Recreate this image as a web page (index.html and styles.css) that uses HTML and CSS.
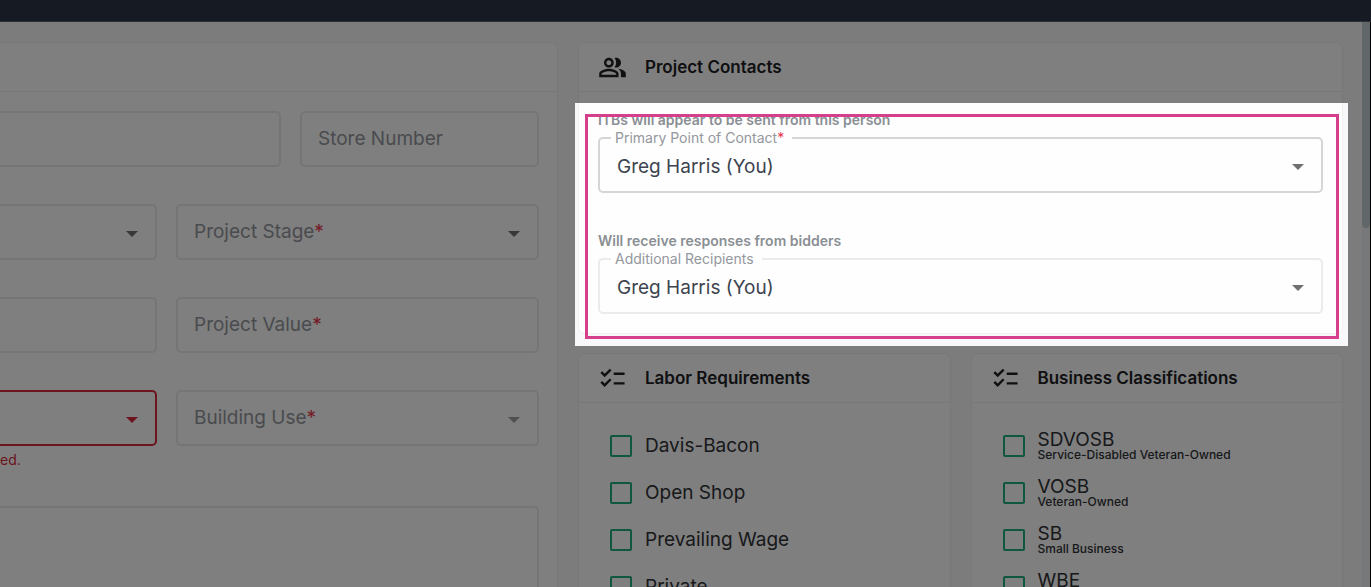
FILE: index.html
```html
<!DOCTYPE html>
<html lang="en">
<head>
    <meta charset="UTF-8">
    <title>Create Project</title>
    <link rel="stylesheet" href="styles.css">
</head>
<body>
    <svg class="sprite" aria-hidden="true">
        <symbol id="arrow" viewBox="0 0 24 24"><path d="M6 10l6 6 6-6z"/></symbol>
        <symbol id="checklist" viewBox="0 0 24 24"><path d="M22 7h-9v2h9V7zm0 8h-9v2h9v-2zM5.54 11L2 7.46l1.41-1.41 2.12 2.12 4.24-4.24 1.41 1.41L5.54 11zm0 8L2 15.46l1.41-1.41 2.12 2.12 4.24-4.24 1.41 1.41L5.54 19z"/></symbol>
        <symbol id="people" viewBox="0 0 24 24"><path d="M16.67 13.13C18.04 14.06 19 15.32 19 17v3h4v-3c0-2.18-3.57-3.47-6.33-3.87zM15 12c2.21 0 4-1.79 4-4s-1.79-4-4-4c-.47 0-.91.1-1.33.24C14.5 5.27 15 6.58 15 8s-.5 2.73-1.33 3.76c.42.14.86.24 1.33.24zM9 12c2.21 0 4-1.79 4-4s-1.79-4-4-4-4 1.79-4 4 1.79 4 4 4zm0-6c1.1 0 2 .9 2 2s-.9 2-2 2-2-.9-2-2 .9-2 2-2zm0 7c-2.67 0-8 1.34-8 4v3h16v-3c0-2.66-5.33-4-8-4zm6 5H3v-.99C3.2 16.29 6.3 15 9 15s5.8 1.29 6 2v1z"/></symbol>
    </svg>

    <header class="topbar"></header>
    <div class="app">
        <main class="page">
            <section class="card details">
                <div class="card-header"></div>
                <form class="form">
                    <div class="row row-name">
                        <div class="field cut">
                            <input type="text" aria-label="Project Name">
                        </div>
                        <div class="field">
                            <input type="text" id="storeNumber">
                            <label for="storeNumber">Store Number</label>
                        </div>
                    </div>
                    <div class="row">
                        <div class="field cut">
                            <select aria-label="Project Type"><option></option></select>
                            <svg class="arrow"><use href="#arrow"/></svg>
                        </div>
                        <div class="field">
                            <select id="projectStage"><option></option></select>
                            <label for="projectStage">Project Stage<span class="required">*</span></label>
                            <svg class="arrow"><use href="#arrow"/></svg>
                        </div>
                    </div>
                    <div class="row">
                        <div class="field cut">
                            <input type="text" aria-label="Project Size">
                        </div>
                        <div class="field">
                            <input type="text" id="projectValue">
                            <label for="projectValue">Project Value<span class="required">*</span></label>
                        </div>
                    </div>
                    <div class="row">
                        <div class="field cut error">
                            <select aria-label="Building Type"><option></option></select>
                            <svg class="arrow"><use href="#arrow"/></svg>
                            <p class="error-text">ed.</p>
                        </div>
                        <div class="field muted">
                            <select id="buildingUse"><option></option></select>
                            <label for="buildingUse">Building Use<span class="required">*</span></label>
                            <svg class="arrow"><use href="#arrow"/></svg>
                        </div>
                    </div>
                    <div class="field cut">
                        <textarea rows="6" aria-label="Description"></textarea>
                    </div>
                </form>
            </section>

            <div class="side">
                <section class="card contacts">
                    <div class="card-header">
                        <svg class="icon"><use href="#people"/></svg>
                        <h2>Project Contacts</h2>
                    </div>
                    <div class="contacts-body">
                        <div>
                            <p class="hint">ITBs will appear to be sent from this person</p>
                            <div class="field filled strong">
                                <select id="primaryContact"><option>Greg Harris (You)</option></select>
                                <label for="primaryContact">Primary Point of Contact<span class="required">*</span></label>
                                <svg class="arrow"><use href="#arrow"/></svg>
                            </div>
                        </div>
                        <div>
                            <p class="hint">Will receive responses from bidders</p>
                            <div class="field filled">
                                <select id="recipients"><option>Greg Harris (You)</option></select>
                                <label for="recipients">Additional Recipients</label>
                                <svg class="arrow"><use href="#arrow"/></svg>
                            </div>
                        </div>
                    </div>
                    <div class="spotlight"></div>
                </section>

                <div class="lists">
                    <section class="card">
                        <div class="card-header">
                            <svg class="icon"><use href="#checklist"/></svg>
                            <h2>Labor Requirements</h2>
                        </div>
                        <div class="checks">
                            <label class="check"><input type="checkbox"><span>Davis-Bacon</span></label>
                            <label class="check"><input type="checkbox"><span>Open Shop</span></label>
                            <label class="check"><input type="checkbox"><span>Prevailing Wage</span></label>
                            <label class="check"><input type="checkbox"><span>Private</span></label>
                        </div>
                    </section>
                    <section class="card">
                        <div class="card-header">
                            <svg class="icon"><use href="#checklist"/></svg>
                            <h2>Business Classifications</h2>
                        </div>
                        <div class="checks">
                            <label class="check"><input type="checkbox"><span>SDVOSB<small>Service-Disabled Veteran-Owned</small></span></label>
                            <label class="check"><input type="checkbox"><span>VOSB<small>Veteran-Owned</small></span></label>
                            <label class="check"><input type="checkbox"><span>SB<small>Small Business</small></span></label>
                            <label class="check"><input type="checkbox"><span>WBE<small></small></span></label>
                        </div>
                    </section>
                </div>
            </div>
        </main>
        <div class="scrollbar"><div class="thumb"></div></div>
    </div>
</body>
</html>
```
FILE: styles.css
```css
* {
    box-sizing: border-box;
}
body {
    margin: 0;
    height: 100vh;
    display: flex;
    flex-direction: column;
    overflow: hidden;
    background-color: #f8f8fb;
    color: #303236;
    font-family: Inter, "Liberation Sans", sans-serif;
    font-size: 19px;
}
h2, p {
    margin: 0;
}
.sprite {
    display: none;
}
.topbar {
    flex: none;
    height: 22px;
    background-color: #2b3547;
    border-bottom: 1px solid #54606c;
}
.app {
    flex: 1;
    min-height: 0;
    display: flex;
}
.page {
    flex: 1;
    display: grid;
    grid-template-columns: 558fr 765fr;
    align-items: start;
    gap: 20px;
    padding: 20px 19px 20px 0;
}
.scrollbar {
    width: 9px;
    background-color: #eff1f4;
    border-right: 1px solid #000;
}
.thumb {
    height: 206px;
    border-radius: 0 0 4px 4px;
    background-color: #c2ccd0;
}

/* cards */
.card {
    background-color: #fefefe;
    border: 1px solid #f0f0f2;
    border-radius: 7px;
}
.card-header {
    display: flex;
    align-items: center;
    gap: 19px;
    height: 49px;
    padding: 0 19px;
    border-bottom: 1px solid #f0f0f2;
}
.card-header h2 {
    color: #202124;
    font-size: 17px;
    font-weight: 600;
    line-height: 24px;
}
.icon {
    width: 29px;
    height: 29px;
    margin-right: -1px;
    fill: #202124;
}
.details {
    border-left: none;
    border-radius: 0 7px 7px 0;
}

/* form */
.form {
    display: flex;
    flex-direction: column;
    gap: 37px;
    padding: 19px 18px 19px 0;
}
.row {
    display: grid;
    grid-template-columns: 157fr 363fr;
    gap: 19px;
}
.row-name {
    grid-template-columns: 281fr 239fr;
}
.field {
    position: relative;
}
.field input,
.field select,
.field textarea {
    display: block;
    width: 100%;
    height: 56px;
    margin: 0;
    padding: 2px 44px 0 17px;
    appearance: none;
    background: transparent;
    border: 2px solid #ebebec;
    border-radius: 5px;
    color: #3d444f;
    font: inherit;
    outline: none;
}
.field textarea {
    height: auto;
    resize: none;
}
.field.cut input,
.field.cut select,
.field.cut textarea {
    border-left: none;
    border-top-left-radius: 0;
    border-bottom-left-radius: 0;
}
.field label {
    position: absolute;
    top: 16px;
    left: 18px;
    color: #94979d;
    line-height: 24px;
    pointer-events: none;
}
.required {
    color: #e8354a;
}
.arrow {
    position: absolute;
    top: 17px;
    right: 13px;
    width: 24px;
    height: 24px;
    fill: #707070;
    pointer-events: none;
}
.muted .arrow {
    fill: #a0a0a0;
}
.field.error select {
    border-color: #d92a3c;
}
.error .arrow {
    fill: #d92a3c;
}
.error-text {
    margin-top: 5px;
    color: #d92a3c;
    font-size: 14px;
    line-height: 18px;
}

/* contacts */
.contacts {
    position: relative;
}
.contacts-body {
    display: flex;
    flex-direction: column;
    gap: 39px;
    padding: 19px;
}
.hint {
    margin-bottom: 8px;
    color: #8a8f94;
    font-size: 14px;
    font-weight: 600;
    line-height: 18px;
}
.field.strong select {
    border-color: #d5d5d5;
}
.field.filled label {
    top: -8px;
    left: 13px;
    padding: 0 8px 0 4px;
    background-color: #fefefe;
    font-size: 14px;
    line-height: 18px;
}

/* guided tour highlight, the shadow dims the rest of the window */
.spotlight {
    position: absolute;
    z-index: 10;
    inset: 60px -6px -13px -4px;
    box-shadow: 0 0 0 2000px rgba(0, 0, 0, 0.5);
    pointer-events: none;
}
.spotlight::after {
    content: "";
    position: absolute;
    inset: 11px 9px 7px 10px;
    border: 3px solid #d63f8c;
}

/* checkbox lists */
.lists {
    display: grid;
    grid-template-columns: 1fr 1fr;
    gap: 20px;
    margin-top: 19px;
}
.checks {
    padding: 19px 19px 19px 31px;
}
.check {
    display: flex;
    align-items: center;
    gap: 13px;
    height: 47px;
    line-height: 18px;
}
.check input {
    appearance: none;
    flex: none;
    width: 22px;
    height: 22px;
    margin: 0;
    border: 2px solid #1fae82;
    border-radius: 2px;
}
.check small {
    display: block;
    min-height: 12px;
    font-size: 12px;
    font-weight: 500;
    line-height: 12px;
}
```
